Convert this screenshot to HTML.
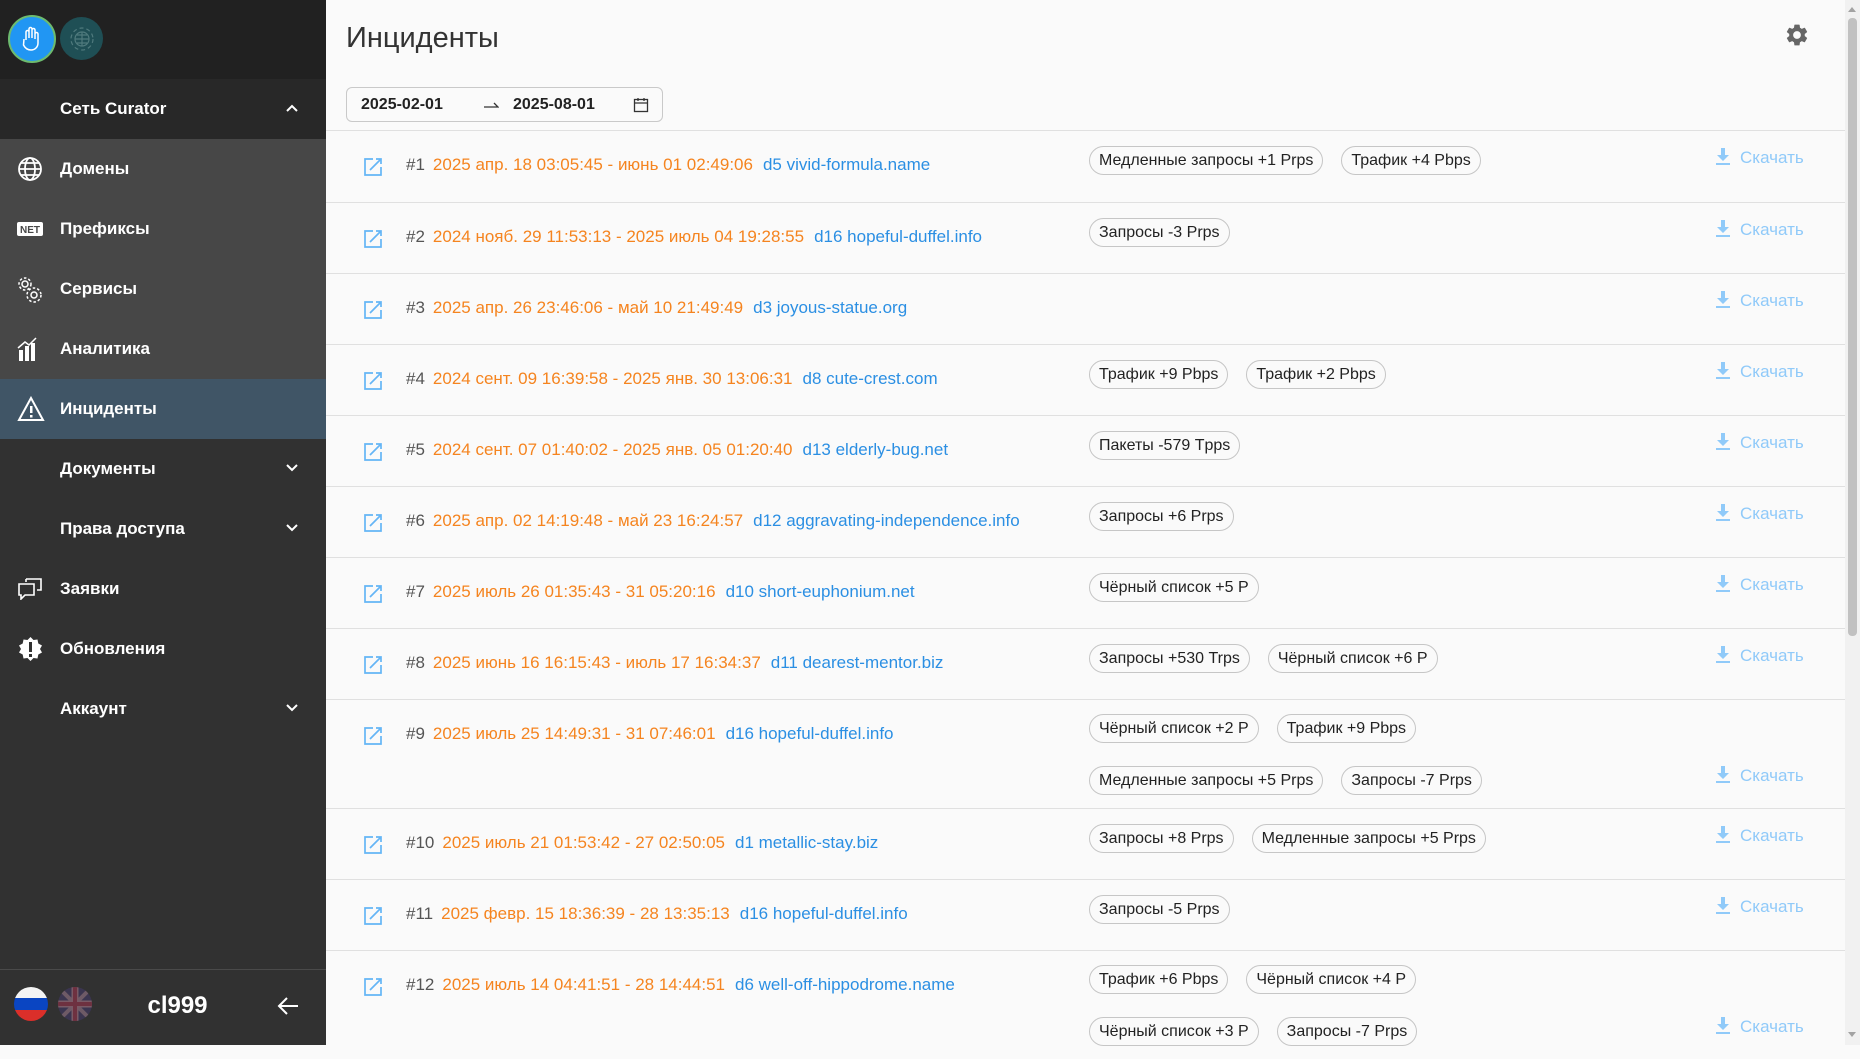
<!DOCTYPE html>
<html><head><meta charset="utf-8"><style>
*{box-sizing:border-box;margin:0;padding:0}
body{width:1860px;height:1045px;overflow:hidden;background:#fafafa;font-family:"Liberation Sans",sans-serif;position:relative}
#sb{position:absolute;left:0;top:0;width:326px;height:1045px;background:#313131;color:#fff}
.top{position:absolute;left:0;top:0;width:326px;height:79px;background:#212121}
.mi{position:absolute;left:0;width:326px;height:60px;font-weight:bold;font-size:17px;line-height:60px;padding-left:60px}
.mi svg.ic{position:absolute;left:17px;top:17px}
.chev{position:absolute;left:285px;top:24px}
#main{position:absolute;left:326px;top:0;width:1519px;height:1045px}
h1{position:absolute;left:20px;top:22px;font-size:29px;font-weight:normal;color:#333}
.dp{position:absolute;left:20px;top:87px;width:317px;height:35px;border:1px solid #c9c9c9;border-radius:6px;font-size:16px;font-weight:bold;color:#222}
.row{position:absolute;left:0;width:1519px;border-top:1px solid #e0e0e0}
.ed{position:absolute;left:37px}
.tx{position:absolute;left:80px;font-size:17px;white-space:nowrap;color:#555}
.tx .d{color:#f5841f;margin-left:8px}
.tx .l{color:#2b8fe3;margin-left:10px}
.chips{position:absolute;left:763px;width:560px}
.chip{display:inline-block;height:29px;line-height:27px;border:1px solid #c6c6c6;border-radius:15px;padding:0 9px;font-size:16px;color:#222;margin-right:18px;white-space:nowrap}
.cl2{margin-top:23px}
.dl{position:absolute;left:1390px;font-size:17px;color:#90caf9;white-space:nowrap}
.dl svg{vertical-align:-2px;margin-right:10px}
</style></head><body>
<div id="sb">
 <div class="top">
  <div style="position:absolute;left:8px;top:15px;width:48px;height:48px;border-radius:50%;background:#2196f3;border:2px solid #6dbb6f"></div>
  <svg style="position:absolute;left:20px;top:26px" width="24" height="26" viewBox="0 0 24 26"><path d="M6 14V6a1.5 1.5 0 013 0v6V3a1.5 1.5 0 013 0v9V4a1.5 1.5 0 013 0v9V8a1.5 1.5 0 013 0v9c0 4-3 7-7 7s-6-2-7.5-5L4 13" fill="none" stroke="#fff" stroke-width="1.5"/></svg>
  <div style="position:absolute;left:60px;top:17px;width:43px;height:43px;border-radius:50%;background:#1f4f55"></div>
  <svg style="position:absolute;left:68px;top:25px" width="28" height="28" viewBox="0 0 28 28" fill="none" stroke="#4f7a7d" stroke-width="1.2"><circle cx="14" cy="14" r="7"/><path d="M7 14h14M14 7v14M9 10h10M9 18h10"/><circle cx="14" cy="14" r="11" stroke-dasharray="4 3"/></svg>
 </div>
 <div class="mi" style="top:79px;background:#282828">Сеть Curator<svg class="chev" width="14" height="10" viewBox="0 0 14 10"><path d="M2 8l5-5 5 5" fill="none" stroke="#fff" stroke-width="2"/></svg></div>
 <div style="position:absolute;top:139px;left:0;width:326px;height:240px;background:#474747"></div>
 <div class="mi" style="top:139px"><svg class="ic" width="26" height="26" viewBox="0 0 26 26" fill="none" stroke="#fff" stroke-width="1.8"><circle cx="13" cy="13" r="11"/><ellipse cx="13" cy="13" rx="5" ry="11"/><path d="M2 13h22M4 7h18M4 19h18"/></svg>Домены</div>
 <div class="mi" style="top:199px"><svg class="ic" style="top:22px" width="26" height="16" viewBox="0 0 26 16"><rect x="0" y="1" width="26" height="14" rx="2" fill="#fff"/><text x="13" y="12" font-size="10" font-weight="bold" fill="#474747" text-anchor="middle" font-family="Liberation Sans">NET</text></svg>Префиксы</div>
 <div class="mi" style="top:259px"><svg class="ic" width="26" height="28" viewBox="0 0 26 28" fill="none" stroke="#fff" stroke-width="1.5"><circle cx="8" cy="8" r="3"/><circle cx="8" cy="8" r="6" stroke-dasharray="2.5 2"/><circle cx="17" cy="19" r="3"/><circle cx="17" cy="19" r="7" stroke-dasharray="2.5 2"/></svg>Сервисы</div>
 <div class="mi" style="top:319px"><svg class="ic" width="22" height="26" viewBox="0 0 22 26" fill="#fff"><rect x="2" y="14" width="4" height="11"/><rect x="8" y="10" width="4" height="15"/><rect x="14" y="7" width="4" height="18"/><path d="M1 12l7-6 4 3 7-7" stroke="#fff" stroke-width="1.5" fill="none"/></svg>Аналитика</div>
 <div class="mi" style="top:379px;background:#405566"><svg class="ic" width="28" height="26" viewBox="0 0 28 26"><path d="M14 2L2 24h24z" fill="none" stroke="#fff" stroke-width="2"/><rect x="13" y="10" width="2.5" height="7" fill="#fff"/><rect x="13" y="19" width="2.5" height="2.5" fill="#fff"/></svg>Инциденты</div>
 <div class="mi" style="top:439px">Документы<svg class="chev" width="14" height="10" viewBox="0 0 14 10"><path d="M2 2l5 5 5-5" fill="none" stroke="#fff" stroke-width="2"/></svg></div>
 <div class="mi" style="top:499px">Права доступа<svg class="chev" width="14" height="10" viewBox="0 0 14 10"><path d="M2 2l5 5 5-5" fill="none" stroke="#fff" stroke-width="2"/></svg></div>
 <div class="mi" style="top:559px"><svg class="ic" width="27" height="24" viewBox="0 0 27 24" fill="none" stroke="#fff" stroke-width="1.6"><path d="M9 3h15v11h-4M9 3v3"/><path d="M2 8h15v11H8l-4 4v-4H2z"/></svg>Заявки</div>
 <div class="mi" style="top:619px"><svg class="ic" width="27" height="27" viewBox="0 0 27 27"><path d="M13.5 1l3 3 4-.5.8 4 3.7 2-2 3.5 2 3.5-3.7 2-.8 4-4-.5-3 3-3-3-4 .5-.8-4-3.7-2 2-3.5-2-3.5 3.7-2 .8-4 4 .5z" fill="#fff"/><rect x="12" y="6" width="3" height="10" fill="#313131"/><rect x="12" y="18" width="3" height="3" fill="#313131"/></svg>Обновления</div>
 <div class="mi" style="top:679px">Аккаунт<svg class="chev" width="14" height="10" viewBox="0 0 14 10"><path d="M2 2l5 5 5-5" fill="none" stroke="#fff" stroke-width="2"/></svg></div>
 <div style="position:absolute;left:0;top:969px;width:326px;border-top:1px solid #4a4a4a"></div>
 <svg style="position:absolute;left:13px;top:986px" width="36" height="36" viewBox="0 0 36 36"><clipPath id="c1"><circle cx="18" cy="18" r="17"/></clipPath><g clip-path="url(#c1)"><rect width="36" height="12" fill="#f4f4f4"/><rect y="12" width="36" height="12" fill="#0a45c2"/><rect y="24" width="36" height="12" fill="#db2f2a"/></g></svg>
 <svg style="position:absolute;left:57px;top:986px" width="36" height="36" viewBox="0 0 36 36"><clipPath id="c2"><circle cx="18" cy="18" r="17"/></clipPath><g clip-path="url(#c2)"><rect width="36" height="36" fill="#3b3550"/><path d="M0 0L36 36M36 0L0 36" stroke="#6e5a66" stroke-width="4"/><path d="M18 0v36M0 18h36" stroke="#7a5a66" stroke-width="7"/><path d="M18 0v36M0 18h36" stroke="#6e3140" stroke-width="4"/></g></svg>
 <div style="position:absolute;left:110px;top:992px;width:135px;text-align:center;font-size:24px;font-weight:bold">cl999</div>
 <svg style="position:absolute;left:276px;top:996px" width="24" height="20" viewBox="0 0 24 20"><path d="M22 10H3M11 2L3 10l8 8" fill="none" stroke="#fff" stroke-width="2"/></svg>
</div>

<div style="position:absolute;left:1845px;top:0;width:15px;height:1045px;background:#f1f1f1"></div>
<div style="position:absolute;left:1848px;top:18px;width:9px;height:618px;background:#c1c1c1;border-radius:4px"></div>
<svg style="position:absolute;left:1846px;top:4px" width="12" height="10"><path d="M2 8l4-5 4 5z" fill="#a3a3a3"/></svg>
<svg style="position:absolute;left:1846px;top:1030px" width="12" height="10"><path d="M2 2l4 5 4-5z" fill="#a3a3a3"/></svg>

<div id="main">
 <h1>Инциденты</h1>
 <svg style="position:absolute;left:1458px;top:22px" width="26" height="26" viewBox="0 0 24 24"><path fill="#666" d="M19.14 12.94a7.1 7.1 0 000-1.88l2.03-1.58a.5.5 0 00.12-.61l-1.920-3.32a.5.5 0 00-.59-.22l-2.39.96a7 7 0 00-1.62-.94l-.36-2.54A.5.5 0 0013.9 2.4h-3.84a.5.5 0 00-.48.41l-.36 2.54a7 7 0 00-1.62.94l-2.39-.96a.5.5 0 00-.59.22L2.7 8.87a.5.5 0 00.12.61l2.03 1.58a7.1 7.1 0 000 1.88l-2.03 1.58a.5.5 0 00-.12.61l1.92 3.32c.12.22.37.29.59.22l2.39-.96c.5.38 1.040.7 1.62.94l.36 2.54c.05.24.25.41.48.41h3.84c.24 0 .44-.17.47-.41l.36-2.54a7 7 0 001.62-.94l2.39.96c.22.08.47 0 .59-.22l1.92-3.32a.5.5 0 00-.12-.61zM12 15.6A3.6 3.6 0 1112 8.4a3.6 3.6 0 010 7.2z"/></svg>
 <div class="dp">
  <span style="position:absolute;left:14px;top:8px">2025-02-01</span>
  <svg style="position:absolute;left:136px;top:13px" width="16" height="8"><path d="M1 6h14l-4-4" fill="none" stroke="#333" stroke-width="1.3"/></svg>
  <span style="position:absolute;left:166px;top:8px">2025-08-01</span>
  <svg style="position:absolute;left:286px;top:9px" width="16" height="16" viewBox="0 0 16 16" fill="none" stroke="#333" stroke-width="1.3"><rect x="1.5" y="2.5" width="13" height="12"/><path d="M1.5 6h13M5 1v3M11 1v3"/></svg>
 </div>
</div>
<div style="position:absolute;left:326px;top:0">
 <div class="row" style="top:130px;height:72px">
  <svg class="ed" style="top:26px" width="20" height="20" viewBox="0 0 20 20" fill="none" stroke="#64b5f6" stroke-width="1.7"><path d="M10 2H2v16h16v-8M7 13L18 2M13 2h5v5"/></svg>
  <div class="tx" style="top:24px">#1<span class="d">2025 апр. 18 03:05:45 - июнь 01 02:49:06</span><span class="l">d5 vivid-formula.name</span></div>
  <div class="chips" style="top:15px"><span class="chip">Медленные запросы +1 Prps</span><span class="chip">Трафик +4 Pbps</span></div>
  <div class="dl" style="top:17px"><svg width="14" height="17" viewBox="0 0 14 17"><path d="M5 0h4v7h4l-6 6-6-6h4z" fill="#90caf9"/><rect y="15" width="14" height="2" fill="#90caf9"/></svg>Скачать</div>
 </div>
 <div class="row" style="top:202px;height:71px">
  <svg class="ed" style="top:26px" width="20" height="20" viewBox="0 0 20 20" fill="none" stroke="#64b5f6" stroke-width="1.7"><path d="M10 2H2v16h16v-8M7 13L18 2M13 2h5v5"/></svg>
  <div class="tx" style="top:24px">#2<span class="d">2024 нояб. 29 11:53:13 - 2025 июль 04 19:28:55</span><span class="l">d16 hopeful-duffel.info</span></div>
  <div class="chips" style="top:15px"><span class="chip">Запросы -3 Prps</span></div>
  <div class="dl" style="top:17px"><svg width="14" height="17" viewBox="0 0 14 17"><path d="M5 0h4v7h4l-6 6-6-6h4z" fill="#90caf9"/><rect y="15" width="14" height="2" fill="#90caf9"/></svg>Скачать</div>
 </div>
 <div class="row" style="top:273px;height:71px">
  <svg class="ed" style="top:26px" width="20" height="20" viewBox="0 0 20 20" fill="none" stroke="#64b5f6" stroke-width="1.7"><path d="M10 2H2v16h16v-8M7 13L18 2M13 2h5v5"/></svg>
  <div class="tx" style="top:24px">#3<span class="d">2025 апр. 26 23:46:06 - май 10 21:49:49</span><span class="l">d3 joyous-statue.org</span></div>
  <div class="dl" style="top:17px"><svg width="14" height="17" viewBox="0 0 14 17"><path d="M5 0h4v7h4l-6 6-6-6h4z" fill="#90caf9"/><rect y="15" width="14" height="2" fill="#90caf9"/></svg>Скачать</div>
 </div>
 <div class="row" style="top:344px;height:71px">
  <svg class="ed" style="top:26px" width="20" height="20" viewBox="0 0 20 20" fill="none" stroke="#64b5f6" stroke-width="1.7"><path d="M10 2H2v16h16v-8M7 13L18 2M13 2h5v5"/></svg>
  <div class="tx" style="top:24px">#4<span class="d">2024 сент. 09 16:39:58 - 2025 янв. 30 13:06:31</span><span class="l">d8 cute-crest.com</span></div>
  <div class="chips" style="top:15px"><span class="chip">Трафик +9 Pbps</span><span class="chip">Трафик +2 Pbps</span></div>
  <div class="dl" style="top:17px"><svg width="14" height="17" viewBox="0 0 14 17"><path d="M5 0h4v7h4l-6 6-6-6h4z" fill="#90caf9"/><rect y="15" width="14" height="2" fill="#90caf9"/></svg>Скачать</div>
 </div>
 <div class="row" style="top:415px;height:71px">
  <svg class="ed" style="top:26px" width="20" height="20" viewBox="0 0 20 20" fill="none" stroke="#64b5f6" stroke-width="1.7"><path d="M10 2H2v16h16v-8M7 13L18 2M13 2h5v5"/></svg>
  <div class="tx" style="top:24px">#5<span class="d">2024 сент. 07 01:40:02 - 2025 янв. 05 01:20:40</span><span class="l">d13 elderly-bug.net</span></div>
  <div class="chips" style="top:15px"><span class="chip">Пакеты -579 Tpps</span></div>
  <div class="dl" style="top:17px"><svg width="14" height="17" viewBox="0 0 14 17"><path d="M5 0h4v7h4l-6 6-6-6h4z" fill="#90caf9"/><rect y="15" width="14" height="2" fill="#90caf9"/></svg>Скачать</div>
 </div>
 <div class="row" style="top:486px;height:71px">
  <svg class="ed" style="top:26px" width="20" height="20" viewBox="0 0 20 20" fill="none" stroke="#64b5f6" stroke-width="1.7"><path d="M10 2H2v16h16v-8M7 13L18 2M13 2h5v5"/></svg>
  <div class="tx" style="top:24px">#6<span class="d">2025 апр. 02 14:19:48 - май 23 16:24:57</span><span class="l">d12 aggravating-independence.info</span></div>
  <div class="chips" style="top:15px"><span class="chip">Запросы +6 Prps</span></div>
  <div class="dl" style="top:17px"><svg width="14" height="17" viewBox="0 0 14 17"><path d="M5 0h4v7h4l-6 6-6-6h4z" fill="#90caf9"/><rect y="15" width="14" height="2" fill="#90caf9"/></svg>Скачать</div>
 </div>
 <div class="row" style="top:557px;height:71px">
  <svg class="ed" style="top:26px" width="20" height="20" viewBox="0 0 20 20" fill="none" stroke="#64b5f6" stroke-width="1.7"><path d="M10 2H2v16h16v-8M7 13L18 2M13 2h5v5"/></svg>
  <div class="tx" style="top:24px">#7<span class="d">2025 июль 26 01:35:43 - 31 05:20:16</span><span class="l">d10 short-euphonium.net</span></div>
  <div class="chips" style="top:15px"><span class="chip">Чёрный список +5 P</span></div>
  <div class="dl" style="top:17px"><svg width="14" height="17" viewBox="0 0 14 17"><path d="M5 0h4v7h4l-6 6-6-6h4z" fill="#90caf9"/><rect y="15" width="14" height="2" fill="#90caf9"/></svg>Скачать</div>
 </div>
 <div class="row" style="top:628px;height:71px">
  <svg class="ed" style="top:26px" width="20" height="20" viewBox="0 0 20 20" fill="none" stroke="#64b5f6" stroke-width="1.7"><path d="M10 2H2v16h16v-8M7 13L18 2M13 2h5v5"/></svg>
  <div class="tx" style="top:24px">#8<span class="d">2025 июнь 16 16:15:43 - июль 17 16:34:37</span><span class="l">d11 dearest-mentor.biz</span></div>
  <div class="chips" style="top:15px"><span class="chip">Запросы +530 Trps</span><span class="chip">Чёрный список +6 P</span></div>
  <div class="dl" style="top:17px"><svg width="14" height="17" viewBox="0 0 14 17"><path d="M5 0h4v7h4l-6 6-6-6h4z" fill="#90caf9"/><rect y="15" width="14" height="2" fill="#90caf9"/></svg>Скачать</div>
 </div>
 <div class="row" style="top:699px;height:109px">
  <svg class="ed" style="top:26px" width="20" height="20" viewBox="0 0 20 20" fill="none" stroke="#64b5f6" stroke-width="1.7"><path d="M10 2H2v16h16v-8M7 13L18 2M13 2h5v5"/></svg>
  <div class="tx" style="top:24px">#9<span class="d">2025 июль 25 14:49:31 - 31 07:46:01</span><span class="l">d16 hopeful-duffel.info</span></div>
  <div class="chips" style="top:14px"><span class="chip">Чёрный список +2 P</span><span class="chip">Трафик +9 Pbps</span><br><span class="chip cl2">Медленные запросы +5 Prps</span><span class="chip cl2">Запросы -7 Prps</span></div>
  <div class="dl" style="top:66px"><svg width="14" height="17" viewBox="0 0 14 17"><path d="M5 0h4v7h4l-6 6-6-6h4z" fill="#90caf9"/><rect y="15" width="14" height="2" fill="#90caf9"/></svg>Скачать</div>
 </div>
 <div class="row" style="top:808px;height:71px">
  <svg class="ed" style="top:26px" width="20" height="20" viewBox="0 0 20 20" fill="none" stroke="#64b5f6" stroke-width="1.7"><path d="M10 2H2v16h16v-8M7 13L18 2M13 2h5v5"/></svg>
  <div class="tx" style="top:24px">#10<span class="d">2025 июль 21 01:53:42 - 27 02:50:05</span><span class="l">d1 metallic-stay.biz</span></div>
  <div class="chips" style="top:15px"><span class="chip">Запросы +8 Prps</span><span class="chip">Медленные запросы +5 Prps</span></div>
  <div class="dl" style="top:17px"><svg width="14" height="17" viewBox="0 0 14 17"><path d="M5 0h4v7h4l-6 6-6-6h4z" fill="#90caf9"/><rect y="15" width="14" height="2" fill="#90caf9"/></svg>Скачать</div>
 </div>
 <div class="row" style="top:879px;height:71px">
  <svg class="ed" style="top:26px" width="20" height="20" viewBox="0 0 20 20" fill="none" stroke="#64b5f6" stroke-width="1.7"><path d="M10 2H2v16h16v-8M7 13L18 2M13 2h5v5"/></svg>
  <div class="tx" style="top:24px">#11<span class="d">2025 февр. 15 18:36:39 - 28 13:35:13</span><span class="l">d16 hopeful-duffel.info</span></div>
  <div class="chips" style="top:15px"><span class="chip">Запросы -5 Prps</span></div>
  <div class="dl" style="top:17px"><svg width="14" height="17" viewBox="0 0 14 17"><path d="M5 0h4v7h4l-6 6-6-6h4z" fill="#90caf9"/><rect y="15" width="14" height="2" fill="#90caf9"/></svg>Скачать</div>
 </div>
 <div class="row" style="top:950px;height:109px">
  <svg class="ed" style="top:26px" width="20" height="20" viewBox="0 0 20 20" fill="none" stroke="#64b5f6" stroke-width="1.7"><path d="M10 2H2v16h16v-8M7 13L18 2M13 2h5v5"/></svg>
  <div class="tx" style="top:24px">#12<span class="d">2025 июль 14 04:41:51 - 28 14:44:51</span><span class="l">d6 well-off-hippodrome.name</span></div>
  <div class="chips" style="top:14px"><span class="chip">Трафик +6 Pbps</span><span class="chip">Чёрный список +4 P</span><br><span class="chip cl2">Чёрный список +3 P</span><span class="chip cl2">Запросы -7 Prps</span></div>
  <div class="dl" style="top:66px"><svg width="14" height="17" viewBox="0 0 14 17"><path d="M5 0h4v7h4l-6 6-6-6h4z" fill="#90caf9"/><rect y="15" width="14" height="2" fill="#90caf9"/></svg>Скачать</div>
 </div>
</div>
</body></html>
